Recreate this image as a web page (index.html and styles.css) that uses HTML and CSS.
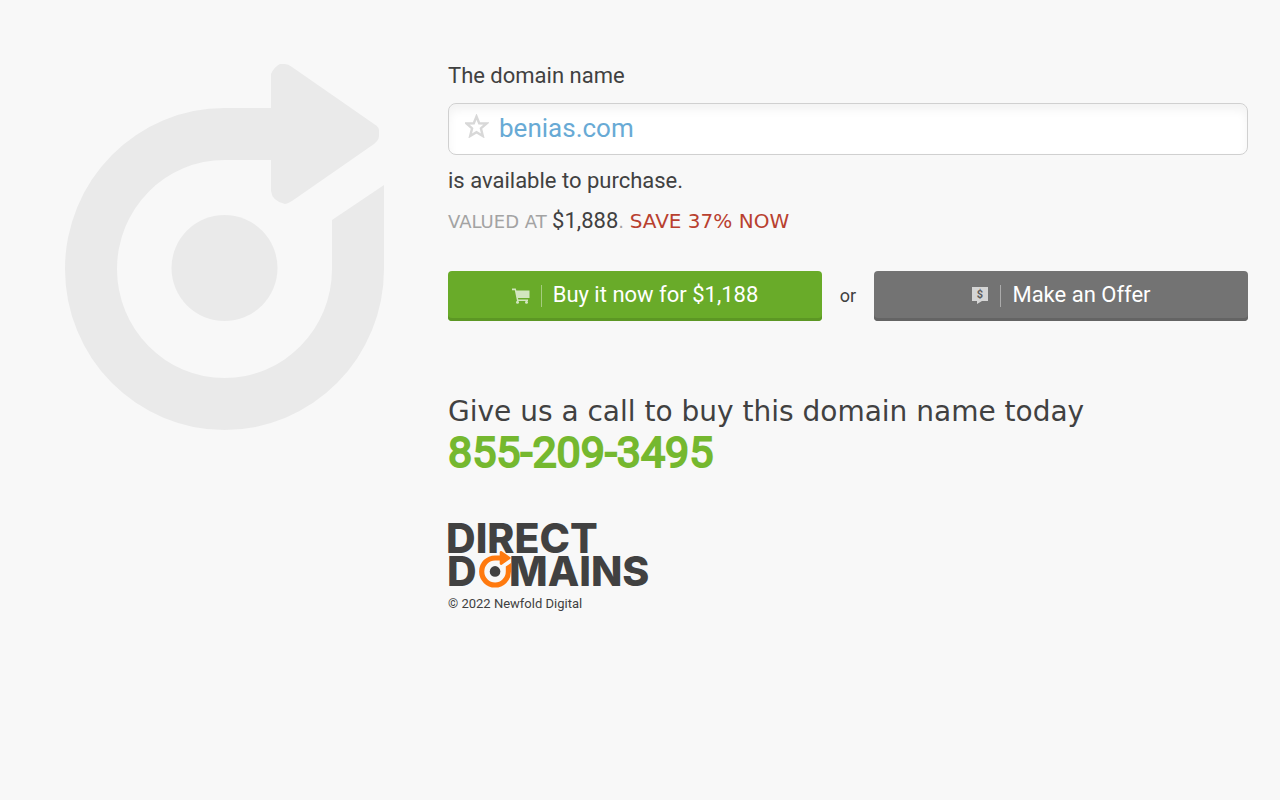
FILE: index.html
```html
<!DOCTYPE html>
<html lang="en">
<head>
    <meta charset="UTF-8">
    <meta name="viewport" content="width=device-width, initial-scale=1.0">
    <title>benias.com is available to purchase</title>
    <link rel="stylesheet" href="styles.css">
</head>
<body>
    <div class="page">
        <div class="mark">
            <svg class="mark-icon" viewBox="0 0 320 367" aria-hidden="true">
                <path id="arrow-ring" d="M207 44H160.500A159.500 161 0 1 0 320 205V121L268 156V205A107.500 109 0 1 1 160.500 96H207V127Q208 137 221 140Q223 140 228 137L310 80Q315 76 315 72V66Q315 63 310 60L228 3Q224 0 221 0H216Q210 3 207 10Z"/>
                <circle cx="160.500" cy="204" r="53"/>
            </svg>
        </div>

        <main class="content">
            <label class="line" for="domain">The domain name</label>
            <div class="domain-box">
                <svg class="star" viewBox="0 0 24 24" aria-hidden="true">
                    <path stroke-width="2.400" d="M11.500 2.500L14.200 9.300L21.500 9.500L15.900 14.400L17.800 22L11.500 18.200L5.200 22L7.100 14.400L1.500 9.500L8.800 9.300Z"/>
                </svg>
                <input class="domain-name" id="domain" type="text" value="benias.com" readonly>
            </div>
            <p class="line">is available to purchase.</p>
            <p class="value">VALUED AT<span class="price"> $1,888</span>. <span class="save">SAVE 37% NOW</span></p>

            <div class="actions">
                <button class="btn btn-buy" type="button">
                    <svg class="btn-icon" viewBox="0 0 18 18" aria-hidden="true">
                        <path d="M0 1.500H3.800L4.300 3.500H17.500V11H6L6.300 12.500H16V14H5L2.800 3.200H0Z"/>
                        <circle cx="5.500" cy="15.300" r="1.500"/>
                        <circle cx="14.500" cy="15.300" r="1.500"/>
                    </svg>
                    <span class="btn-label">Buy it now for $1,188</span>
                </button>
                <span class="or">or</span>
                <button class="btn btn-offer" type="button">
                    <svg class="btn-icon" viewBox="0 0 18 18" aria-hidden="true">
                        <path d="M1 0H17V14H11L6 17V14H1Z"/>
                        <text class="dollar" x="9" y="11">$</text>
                    </svg>
                    <span class="btn-label">Make an Offer</span>
                </button>
            </div>

            <h2 class="call">Give us a call to buy this domain name today</h2>
            <a class="phone" href="tel:8552093495">855-209-3495</a>

            <footer class="footer">
                <svg class="logo" viewBox="0 0 202 68" role="img" aria-label="Direct Domains">
                    <text x="-2" y="31">DIRECT</text>
                    <text x="-1" y="64">D</text>
                    <text x="61" y="64">MAINS</text>
                    <g transform="translate(31 29) scale(0.1)">
                        <use class="logo-ring" href="#arrow-ring"/>
                        <circle cx="160.500" cy="204" r="53"/>
                    </g>
                </svg>
                <p class="copyright">© 2022 Newfold Digital</p>
            </footer>
        </main>
    </div>
</body>
</html>
```
FILE: styles.css
```css
* {
    box-sizing: border-box;
}

body {
    margin: 0;
    background: #f8f8f8;
    color: #414141;
    font-family: Roboto, sans-serif;
    font-size: 22px;
    line-height: 32px;
}

.page {
    display: grid;
    grid-template-columns: 35% 1fr;
    padding: 60px 0 32px;
}

.mark {
    padding: 4px 64px 0;
}

.mark-icon {
    display: block;
    width: 100%;
    fill: #eaeaea;
}

.content {
    padding-right: 32px;
}

.line {
    display: block;
    margin: 0;
}

.domain-box {
    display: flex;
    align-items: center;
    gap: 10px;
    height: 52px;
    margin: 11px 0 10px;
    padding: 0 16px 2px;
    background: #fff;
    border: 1px solid #d0d0d0;
    border-radius: 8px;
    box-shadow: inset 0 6px 10px #f3f3f3;
}

.star {
    width: 24px;
    height: 24px;
    margin-bottom: 4px;
    fill: none;
    stroke: #d8d8d8;
}

.domain-name {
    flex: 1;
    min-width: 0;
    padding: 0;
    border: 0;
    outline: 0;
    background: none;
    color: #68aad5;
    font: 26px Roboto, sans-serif;
}

.value {
    margin: 8px 0 0;
    color: #a3a3a3;
    font-family: "DejaVu Sans", sans-serif;
    font-size: 18px;
}

.price {
    color: #414141;
    font-family: Roboto, sans-serif;
    font-size: 22px;
}

.save {
    color: #b8402f;
    font-size: 20px;
}

.actions {
    display: flex;
    align-items: center;
    margin: 33px 0 73px;
}

.btn {
    display: flex;
    flex: 1;
    align-items: center;
    justify-content: center;
    height: 50px;
    padding: 0;
    border: 0;
    border-radius: 4px;
    color: #fff;
    font: 22px Roboto, sans-serif;
    cursor: pointer;
}

.btn-buy {
    background: #69ab29;
    box-shadow: inset 0 -3px #5c9724;
}

.btn-offer {
    background: #737373;
    box-shadow: inset 0 -3px #646464;
}

.btn-icon {
    width: 18px;
    height: 18px;
    margin-right: 11px;
    fill: #fff;
    opacity: 0.7;
}

.dollar {
    fill: #555;
    font: bold 11px Roboto, sans-serif;
    text-anchor: middle;
}

.btn-label {
    display: flex;
    align-items: center;
    padding-bottom: 3px;
}

.btn-label::before {
    content: "";
    height: 22px;
    margin: 3px 11px 0 0;
    border-left: 1px solid rgba(255, 255, 255, 0.4);
}

.or {
    width: 52px;
    font-size: 18px;
    text-align: center;
}

.call {
    margin: 0;
    font-family: "DejaVu Sans", sans-serif;
    font-size: 28px;
    font-weight: 400;
    line-height: 36px;
}

.phone {
    display: block;
    color: #75b82f;
    font-size: 43px;
    line-height: 44px;
    text-decoration: none;
    -webkit-text-stroke: 2px #75b82f;
}

.footer {
    margin-top: 48px;
}

.logo {
    display: block;
    width: 202px;
    height: 68px;
    overflow: visible;
    fill: #414141;
    font: 800 41px Inter, sans-serif;
}

.logo-ring {
    fill: #ff7a0f;
}

.copyright {
    margin: 4px 0 0;
    font-size: 13px;
    line-height: 20px;
}
```
